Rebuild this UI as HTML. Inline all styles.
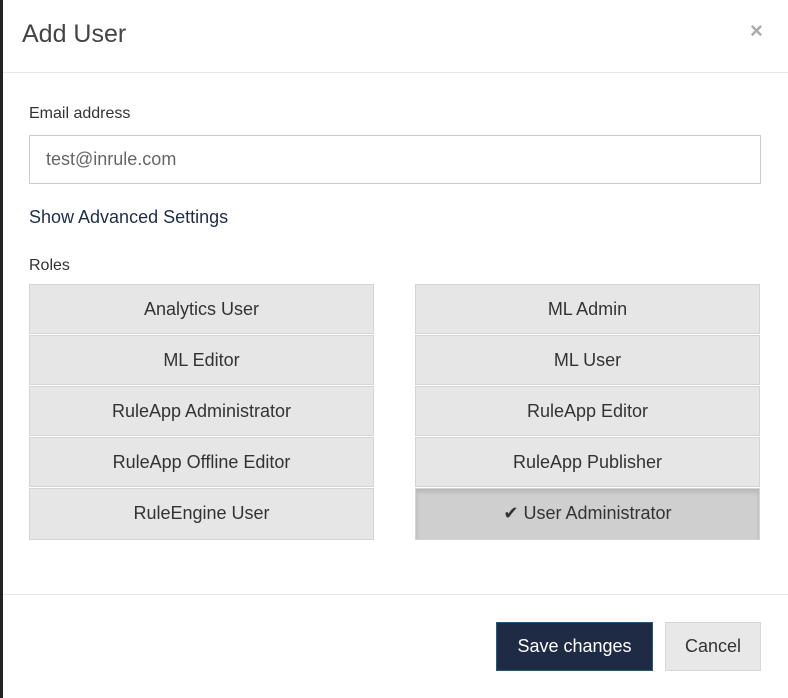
<!DOCTYPE html><html><head><style>
body{margin:0;width:788px;height:698px;background:#fff;font-family:"Liberation Sans",sans-serif;position:relative;overflow:hidden;color:#333}
.a{position:absolute}
.b{position:absolute;width:345px;height:50px;background:#e6e6e6;border:1px solid #d4d4d4;box-sizing:border-box;text-align:center;line-height:49px;font-size:18px;color:#333}
</style></head><body>
<div class="a" style="left:0;top:0;width:3px;height:698px;background:#222"></div>
<div class="a" style="left:22px;top:20px;font-size:25px;color:#444">Add User</div>
<div class="a" style="left:750px;top:18px;font-size:22px;color:#aaa;font-weight:bold">×</div>
<div class="a" style="left:3px;top:72px;width:785px;height:1px;background:#e8e8e8"></div>
<div class="a" style="left:29px;top:105px;font-size:16px;color:#333">Email address</div>
<div class="a" style="left:29px;top:135px;width:732px;height:49px;border:1px solid #ccc;box-sizing:border-box;padding-left:16px;line-height:47px;font-size:18px;color:#666">test@inrule.com</div>
<div class="a" style="left:29px;top:207px;font-size:18px;color:#1f2d4a">Show Advanced Settings</div>
<div class="a" style="left:29px;top:257px;font-size:16px;color:#333">Roles</div>
<div class="b" style="left:29px;top:284px">Analytics User</div>
<div class="b" style="left:29px;top:335px">ML Editor</div>
<div class="b" style="left:29px;top:386px">RuleApp Administrator</div>
<div class="b" style="left:29px;top:437px">RuleApp Offline Editor</div>
<div class="b" style="left:29px;top:488px;height:52px">RuleEngine User</div>
<div class="b" style="left:415px;top:284px">ML Admin</div>
<div class="b" style="left:415px;top:335px">ML User</div>
<div class="b" style="left:415px;top:386px">RuleApp Editor</div>
<div class="b" style="left:415px;top:437px">RuleApp Publisher</div>
<div class="b" style="left:415px;top:488px;height:52px;background:#cfcfcf;box-shadow:inset 0 3px 5px rgba(0,0,0,.12)">✔ User Administrator</div>
<div class="a" style="left:3px;top:594px;width:785px;height:1px;background:#e8e8e8"></div>
<div class="a" style="left:496px;top:622px;width:157px;height:49px;background:#1f2b45;border:1px solid #1a6080;box-sizing:border-box;color:#fff;font-size:18px;text-align:center;line-height:47px">Save changes</div>
<div class="a" style="left:665px;top:622px;width:96px;height:49px;background:#e8e8e8;border:1px solid #d6d6d6;box-sizing:border-box;color:#333;font-size:18px;text-align:center;line-height:47px">Cancel</div>
</body></html>
